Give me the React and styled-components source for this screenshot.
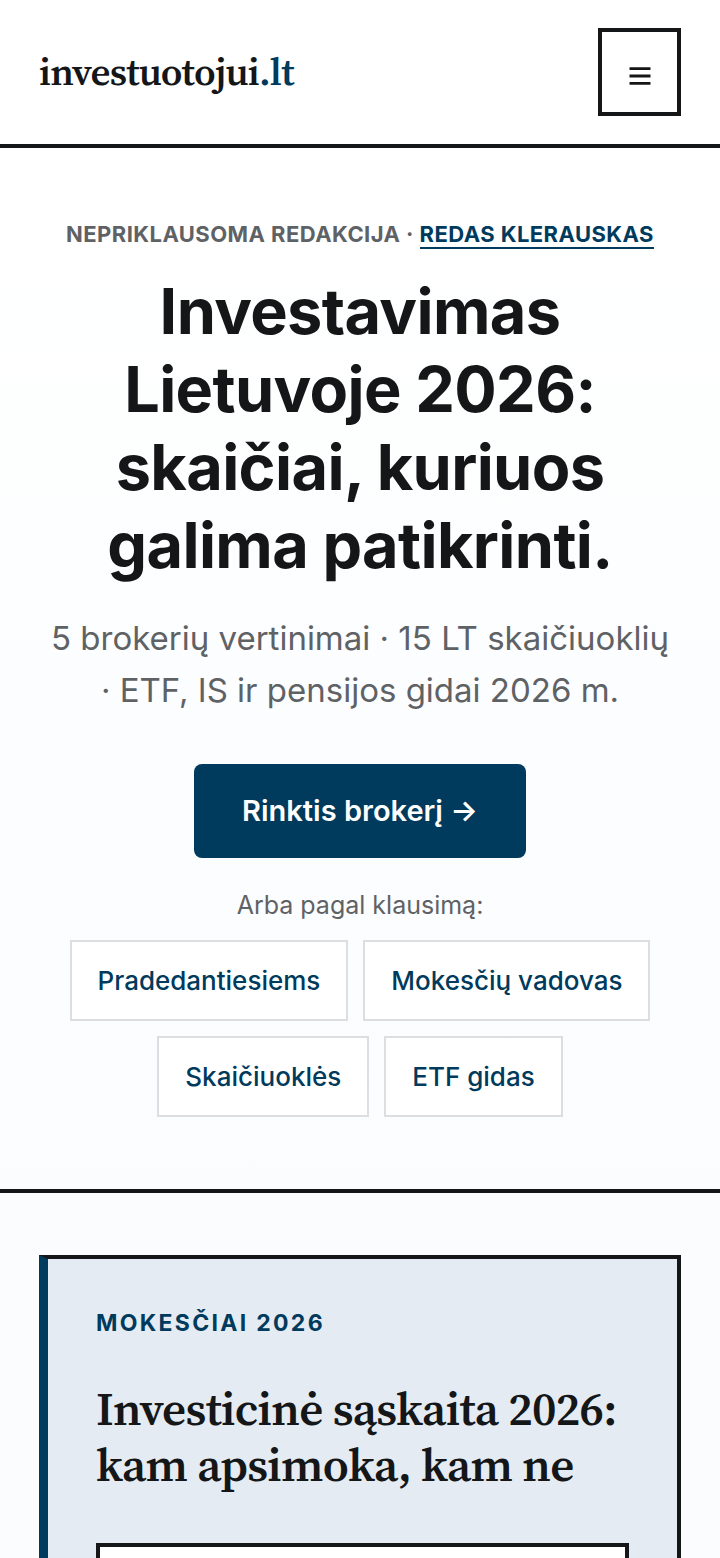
import React from 'react';
import styled, { createGlobalStyle } from 'styled-components';

const Global = createGlobalStyle`
  *, *::before, *::after { box-sizing: border-box; }
  body { margin: 0; background: #fafcfe; color: #141618; font-family: Inter, sans-serif; }
  h1, h2, p { margin: 0; }
  a { text-decoration: none; }
`;
const Header = styled.header`
  display: flex; align-items: center; justify-content: space-between;
  padding: 28px 39px; border-bottom: 4px solid #141618; background: #fff;
`;
const Brand = styled.a`
  font: 600 39px/48px "Source Serif 4", "Noto Serif", "Liberation Serif", serif;
  letter-spacing: -0.02em;
  color: #141618;
  span { color: #003a5c; }
`;
const MenuButton = styled.button`
  display: grid; place-items: center; width: 83px; height: 88px; padding: 8px 0 0;
  border: 4px solid #141618; background: #fff; color: #141618;
`;
const Hero = styled.section`
  display: flex; flex-direction: column; align-items: center;
  padding: 72px 39px; text-align: center;
  border-bottom: 4px solid #141618;
  background: linear-gradient(#fff, #fafcfe);
`;
const Eyebrow = styled.p`
  font-size: 22px; line-height: 28px; font-weight: 700; letter-spacing: 0.02em;
  text-transform: uppercase; color: #5f6265;
  a { color: #003a5c; border-bottom: 2px solid #003a5c; }
`;
const Title = styled.h1`
  margin-top: 24px; font-size: 63px; line-height: 78px; font-weight: 700; letter-spacing: -0.01em;
`;
const Lead = styled.p`
  max-width: 630px; margin-top: 28px; font-size: 33px; line-height: 52px; color: #5f6265;
`;
const Primary = styled.a`
  margin-top: 48px; padding: 24px 48px; border-radius: 8px; background: #003a5c; color: #fff;
  font-size: 29px; line-height: 46px; font-weight: 600;
`;
const Hint = styled.p`
  margin-top: 28px; font-size: 25px; line-height: 38px; color: #5f6265;
`;
const Topics = styled.nav`
  display: flex; flex-wrap: wrap; justify-content: center; gap: 15px; margin-top: 16px;
`;
const Topic = styled.a`
  padding: 19px 26px; border: 2px solid #dcdfe2; background: #fff; color: #003a5c;
  font-size: 26px; line-height: 39px; font-weight: 500;
`;
const Main = styled.main`padding: 62px 39px;`;
const Feature = styled.article`
  padding: 48px; border: 4px solid #141618; border-left: 9px solid #003a5c; background: #e5ebf2;
`;
const Tag = styled.p`
  font-size: 23px; line-height: 32px; font-weight: 700; letter-spacing: 0.1em;
  text-transform: uppercase; color: #003a5c;
`;
const FeatureTitle = styled.h2`
  margin-top: 42px; font: 600 47px/56px "Source Serif 4", "Noto Serif", "Liberation Serif", serif;
  letter-spacing: -0.015em;
`;
const Panel = styled.div`
  height: 160px; margin-top: 50px; border: 4px solid #141618; background: #fff;
`;

export default function App() {
  return (
    <>
      <Global />
      <Header>
        <Brand href="#">investuotojui<span>.lt</span></Brand>
        <MenuButton aria-label="Meniu">
          <svg width="22" height="20" viewBox="0 0 22 20" stroke="currentColor" strokeWidth="2.8"><path d="M.5 2.7h21M.5 10h21M.5 17.3h21" /></svg>
        </MenuButton>
      </Header>
      <Hero>
        <Eyebrow>Nepriklausoma redakcija · <a href="#">Redas Klerauskas</a></Eyebrow>
        <Title>Investavimas Lietuvoje 2026: skaičiai, kuriuos galima patikrinti.</Title>
        <Lead>5 brokerių vertinimai · 15 LT skaičiuoklių · ETF, IS ir pensijos gidai 2026 m.</Lead>
        <Primary href="#">Rinktis brokerį →</Primary>
        <Hint>Arba pagal klausimą:</Hint>
        <Topics>
          <Topic href="#">Pradedantiesiems</Topic>
          <Topic href="#">Mokesčių vadovas</Topic>
          <Topic href="#">Skaičiuoklės</Topic>
          <Topic href="#">ETF gidas</Topic>
        </Topics>
      </Hero>
      <Main>
        <Feature>
          <Tag>Mokesčiai 2026</Tag>
          <FeatureTitle>Investicinė sąskaita 2026: kam apsimoka, kam ne</FeatureTitle>
          <Panel />
        </Feature>
      </Main>
    </>
  );
}
